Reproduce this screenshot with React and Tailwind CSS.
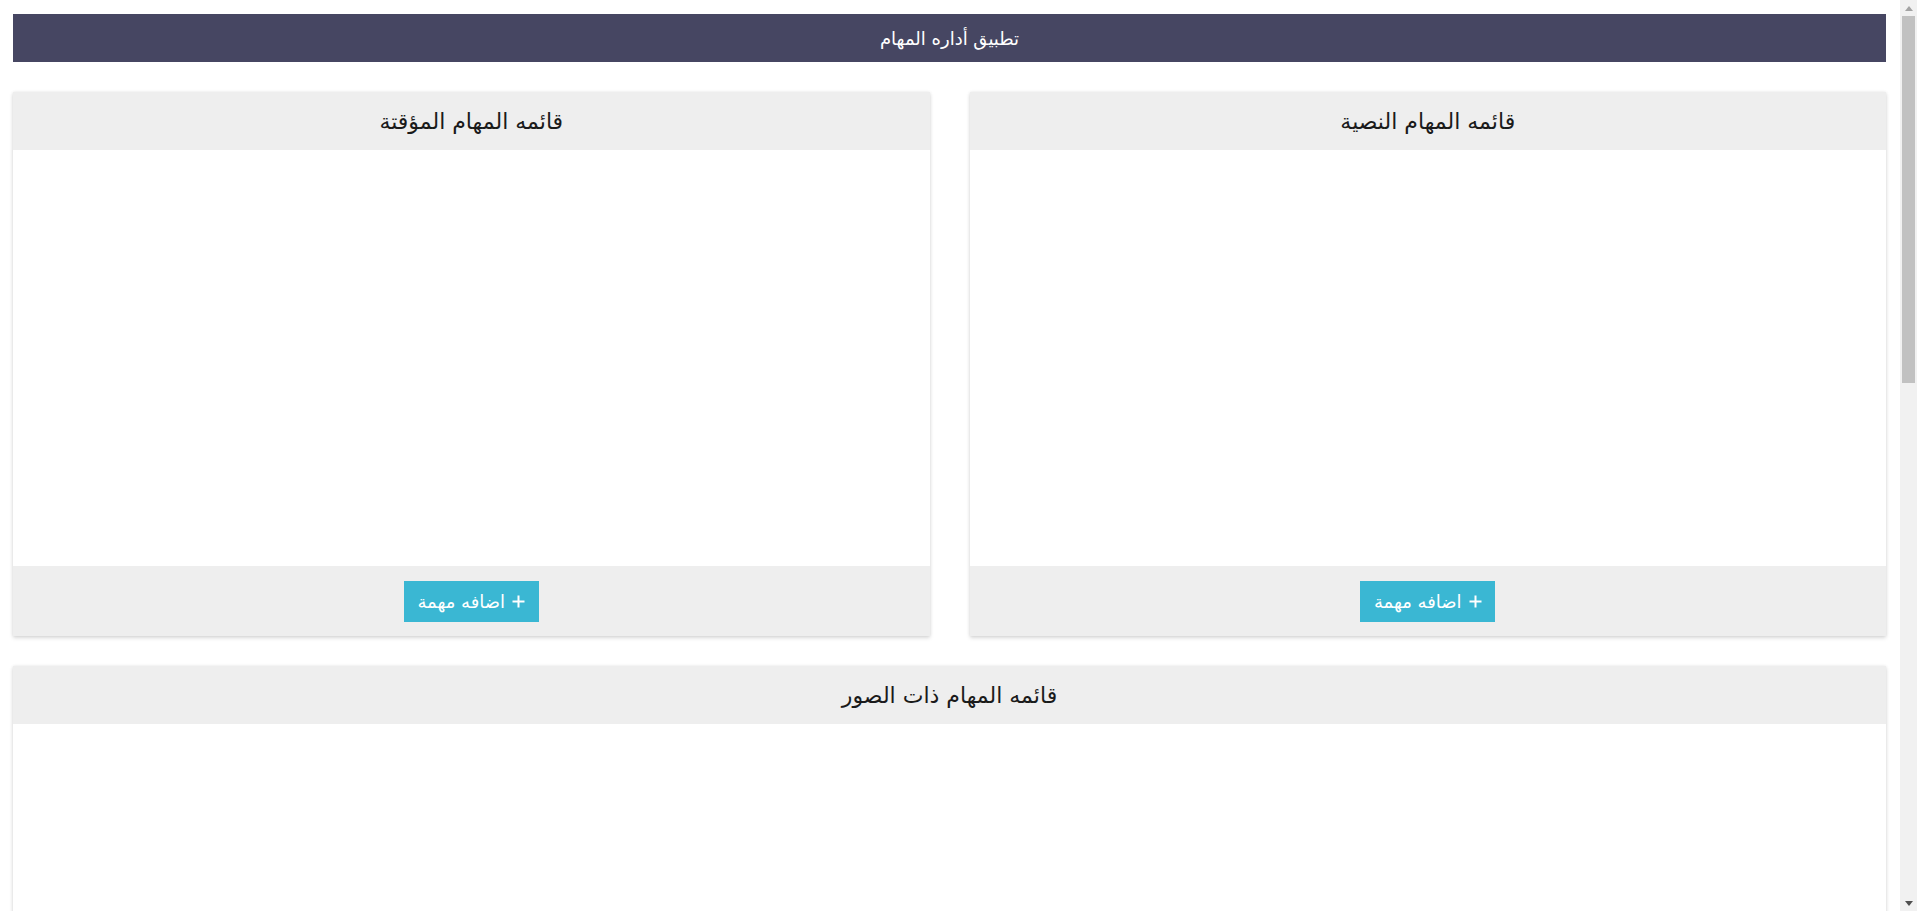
import React from "react";

function Card({ title, bodyClass, footer = true }) {
  return (
    <div className="bg-white shadow-[0_2px_4px_rgba(0,0,0,0.14),0_0_3px_rgba(0,0,0,0.08)]">
      <div className="h-[58px] bg-[#eeeeee] flex items-center justify-center text-[22px] text-[#1a1a1a]">
        {title}
      </div>
      <div className={bodyClass}></div>
      {footer && (
        <div className="h-[70px] bg-[#eeeeee] flex items-center justify-center">
          <button className="h-[41px] w-[135px] bg-[#3ab7d3] text-white text-[18px] flex items-center justify-center gap-[7px]">
            <svg width="13" height="13" viewBox="0 0 13 13" className="shrink-0">
              <path d="M6.5 0.5v12M0.5 6.5h12" stroke="white" strokeWidth="2" fill="none" />
            </svg>
            <span>اضافه مهمة</span>
          </button>
        </div>
      )}
    </div>
  );
}

export default function App() {
  return (
    <div
      dir="rtl"
      className="min-h-screen bg-white pl-[13px] pr-[31px] pt-[14px] pb-[13px]"
      style={{ fontFamily: '"DejaVu Sans", sans-serif' }}
    >
      <div className="h-[48px] bg-[#464662] flex items-center justify-center text-white text-[18px]">
        تطبيق أداره المهام
      </div>
      <div className="grid grid-cols-2 gap-x-[40px] mt-[30px]">
        <Card title="قائمه المهام النصية" bodyClass="h-[416px]" />
        <Card title="قائمه المهام المؤقتة" bodyClass="h-[416px]" />
      </div>
      <div className="mt-[30px]">
        <Card title="قائمه المهام ذات الصور" bodyClass="h-[1440px]" footer={false} />
      </div>

      <div className="fixed top-0 right-0 w-[17px] h-screen bg-[#f1f1f1] flex flex-col items-center">
        <div className="h-[16px] w-full flex items-center justify-center">
          <svg width="8" height="5" viewBox="0 0 8 5">
            <path d="M4 0L8 5H0z" fill="#a3a3a3" />
          </svg>
        </div>
        <div className="w-[13px] h-[367px] bg-[#c1c1c1]"></div>
        <div className="flex-1"></div>
        <div className="h-[16px] w-full flex items-center justify-center">
          <svg width="8" height="5" viewBox="0 0 8 5">
            <path d="M0 0H8L4 5z" fill="#505050" />
          </svg>
        </div>
      </div>
    </div>
  );
}
